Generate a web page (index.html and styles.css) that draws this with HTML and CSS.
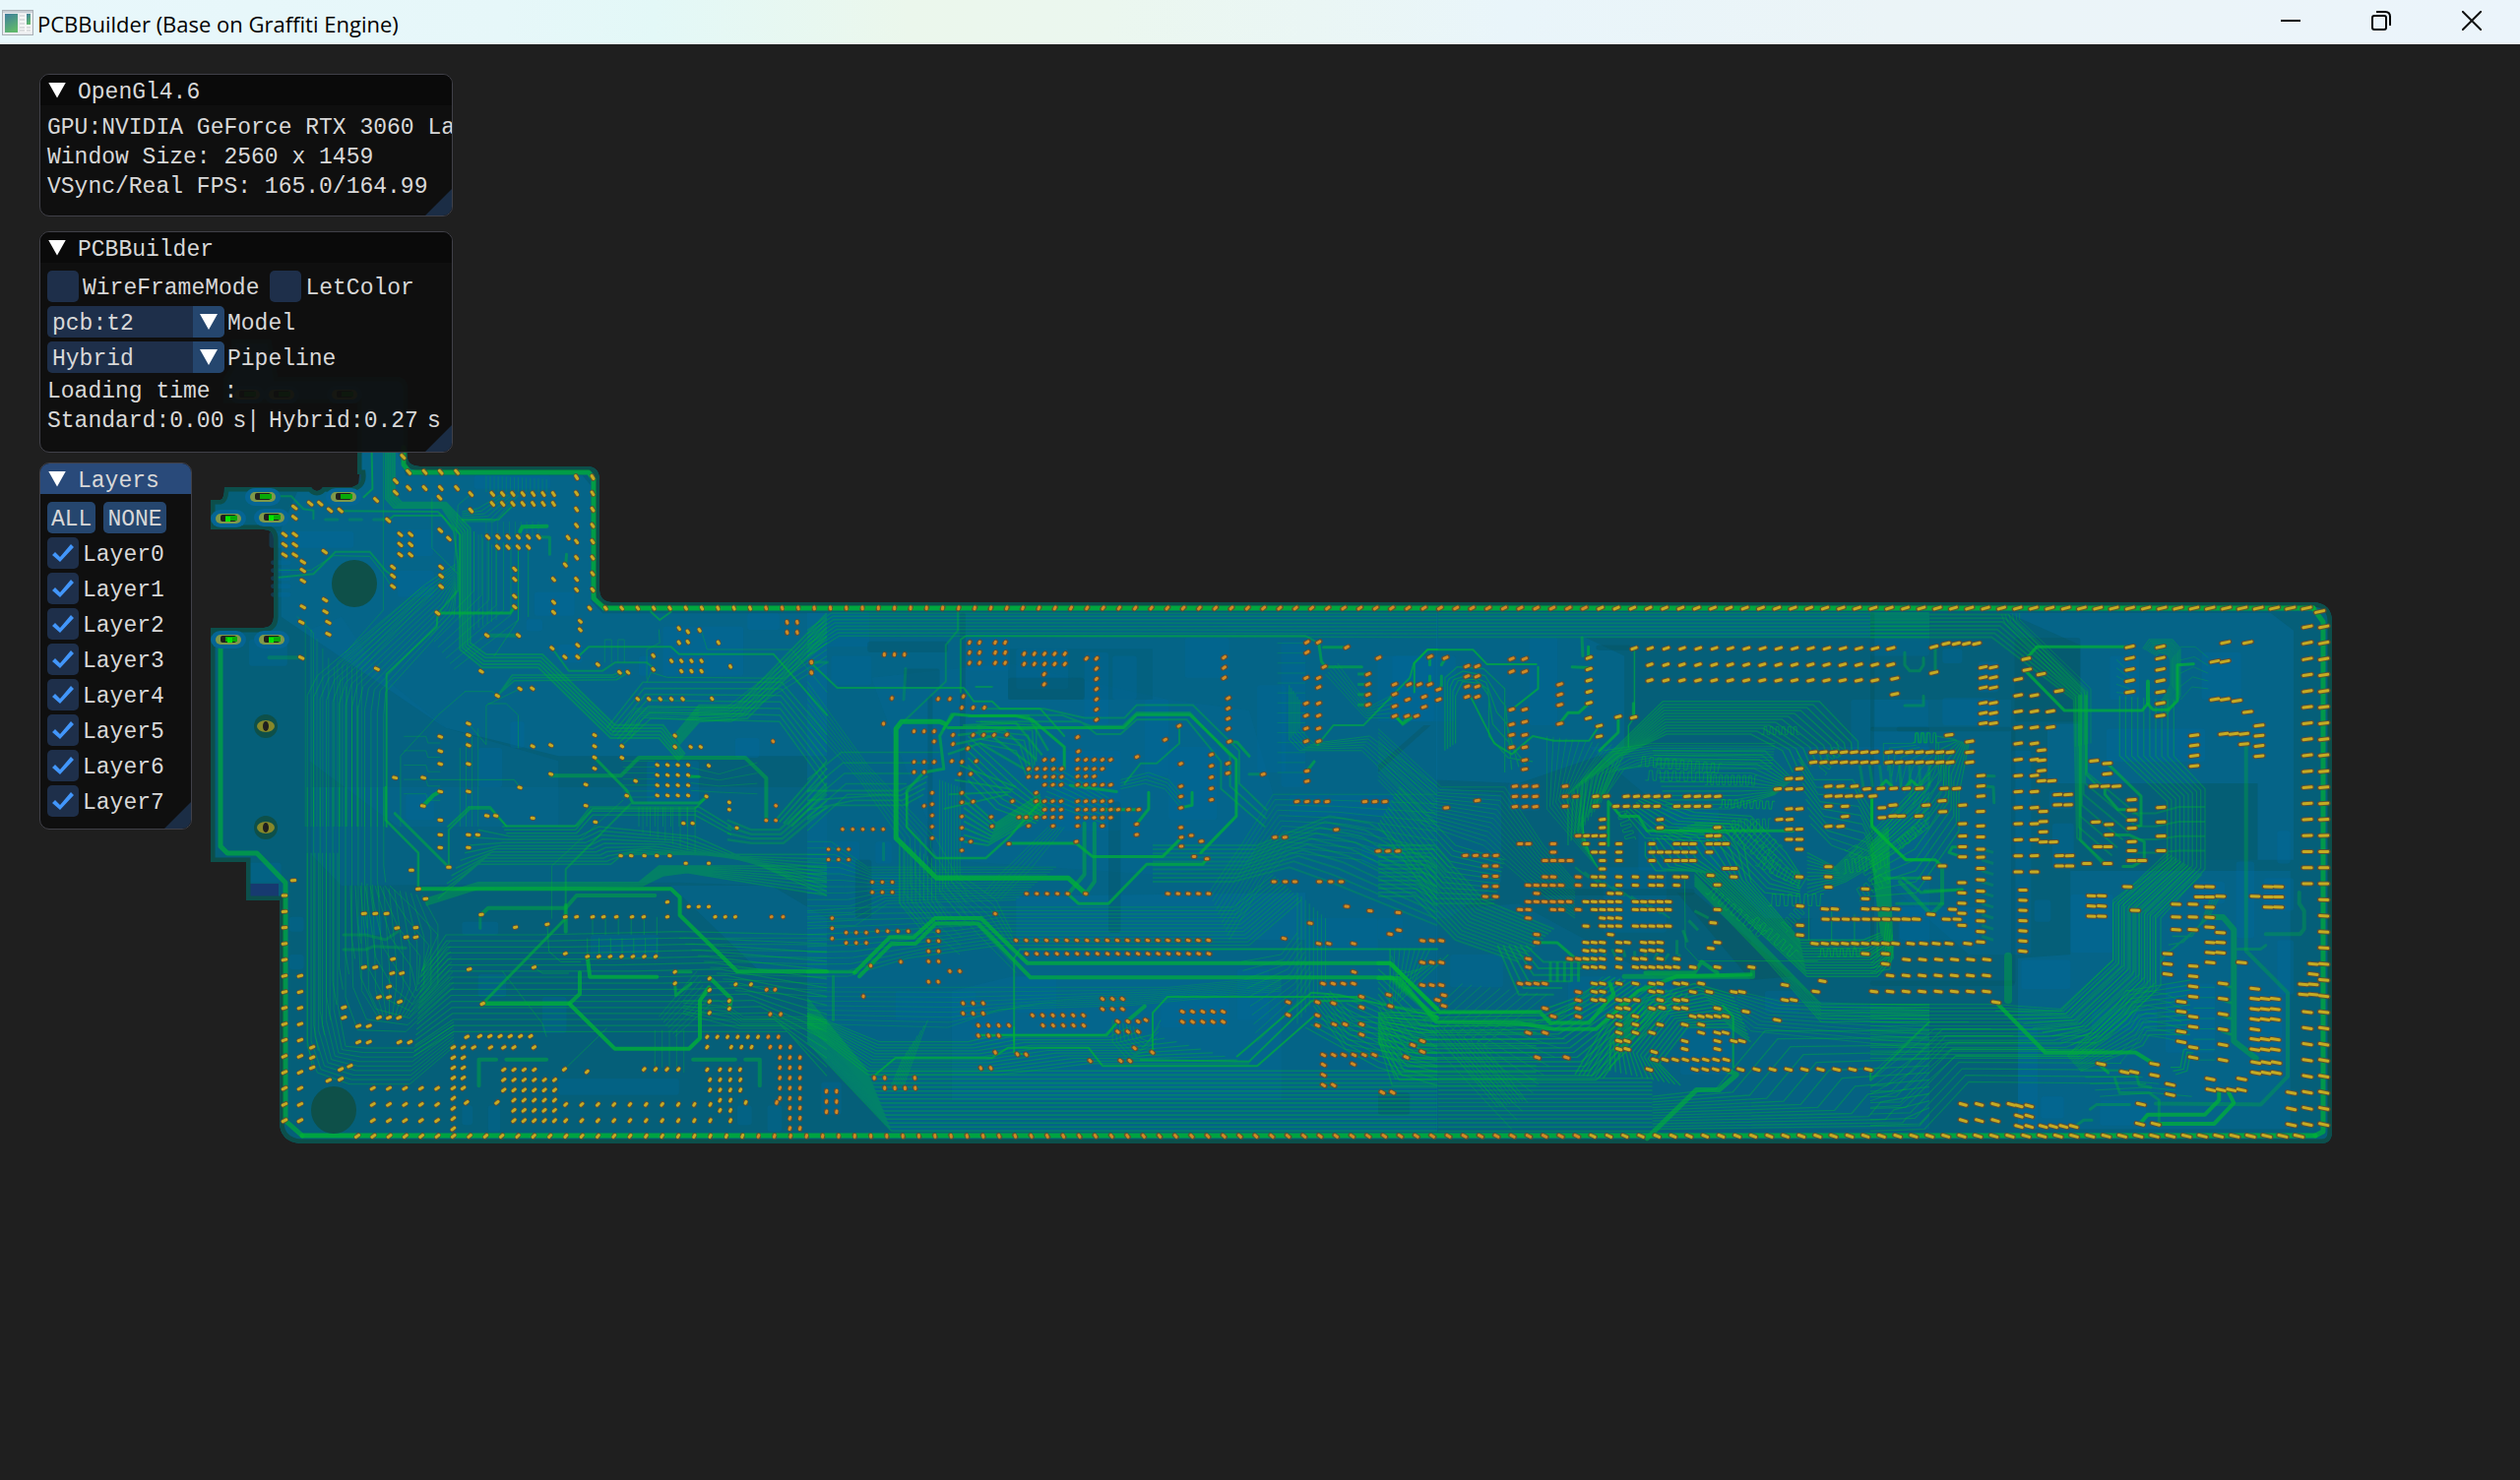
FILE: index.html
```html
<!DOCTYPE html>
<html lang="en">
<head>
<meta charset="utf-8">
<title>PCBBuilder (Base on Graffiti Engine)</title>
<link rel="stylesheet" href="styles.css">
</head>
<body>
<header class="titlebar">
  <svg class="app-icon" width="32" height="26" viewBox="0 0 32 26" aria-hidden="true">
    <defs><linearGradient id="g" x1="0" y1="0" x2="0.4" y2="1"><stop offset="0" stop-color="#3f7d9e"/><stop offset="1" stop-color="#5fb76c"/></linearGradient></defs>
    <rect x=".5" y=".5" width="31" height="25" fill="#e9ebee" stroke="#a9b0b6"/>
    <rect x="1" y="1" width="30" height="2" fill="#c9cfd6"/>
    <rect x="3" y="4" width="13" height="19" fill="url(#g)"/>
    <rect x="18" y="4" width="12" height="19" fill="#f6f6f6"/>
    <path d="M18 6h5M18 10h5M18 14h5M18 18h5M18 21h5M25 18h4M25 21h4" stroke="#c3c6ca"/>
    <rect x="25" y="4" width="4" height="11" fill="url(#g)"/>
  </svg>
  <h1 class="app-title">PCBBuilder (Base on Graffiti Engine)</h1>
  <div class="window-buttons">
    <button class="window-button" aria-label="Minimize"><svg width="20" height="20" viewBox="0 0 20 20"><path d="M0 10h20" stroke="#000" stroke-width="2"/></svg></button>
    <button class="window-button" aria-label="Restore"><svg width="20" height="20" viewBox="0 0 20 20" fill="none" stroke="#000" stroke-width="2"><rect x="1" y="5" width="14" height="14" rx="2"/><path d="M5 1h9q5 0 5 5v9"/></svg></button>
    <button class="window-button" aria-label="Close"><svg width="20" height="20" viewBox="0 0 20 20"><path d="M0 0l20 20M20 0L0 20" stroke="#111" stroke-width="2"/></svg></button>
  </div>
</header>
<main class="scene">
  <svg class="board" id="board" viewBox="0 45 2560 1459" role="img" aria-label="Circuit board"></svg>
  <div class="panels">
    <section class="panel panel-info">
      <div class="panel-head"><button class="collapse" aria-label="Collapse"></button><h2 class="panel-title">OpenGl4.6</h2></div>
      <div class="panel-body">
        <p class="line">GPU:NVIDIA GeForce RTX 3060 La</p>
        <p class="line">Window Size: 2560 x 1459</p>
        <p class="line">VSync/Real FPS: 165.0/164.99</p>
      </div>
    </section>
    <section class="panel panel-builder">
      <div class="panel-head"><button class="collapse" aria-label="Collapse"></button><h2 class="panel-title">PCBBuilder</h2></div>
      <div class="panel-body">
        <div class="row row-checks">
          <label class="check"><input type="checkbox"><span class="caption">WireFrameMode</span></label>
          <label class="check"><input type="checkbox"><span class="caption">LetColor</span></label>
        </div>
        <label class="row combo"><span class="combo-box"><select><option>pcb:t2</option></select></span><span class="caption">Model</span></label>
        <label class="row combo"><span class="combo-box"><select><option>Hybrid</option></select></span><span class="caption">Pipeline</span></label>
        <p class="line">Loading time :</p>
        <p class="line line-times"><span>Standard:0.00</span><span>s|</span><span>Hybrid:0.27</span><span>s</span></p>
      </div>
    </section>
    <section class="panel panel-layers">
      <div class="panel-head"><button class="collapse" aria-label="Collapse"></button><h2 class="panel-title">Layers</h2></div>
      <div class="panel-body">
        <div class="row row-buttons"><button class="push">ALL</button><button class="push">NONE</button></div>
        <label class="row check"><input type="checkbox" checked><span class="caption">Layer0</span></label>
        <label class="row check"><input type="checkbox" checked><span class="caption">Layer1</span></label>
        <label class="row check"><input type="checkbox" checked><span class="caption">Layer2</span></label>
        <label class="row check"><input type="checkbox" checked><span class="caption">Layer3</span></label>
        <label class="row check"><input type="checkbox" checked><span class="caption">Layer4</span></label>
        <label class="row check"><input type="checkbox" checked><span class="caption">Layer5</span></label>
        <label class="row check"><input type="checkbox" checked><span class="caption">Layer6</span></label>
        <label class="row check"><input type="checkbox" checked><span class="caption">Layer7</span></label>
      </div>
    </section>
  </div>
</main>
<script src="board.js"></script>
</body>
</html>
```
FILE: styles.css
```css
* { box-sizing: border-box; margin: 0; padding: 0; }

body {
  min-height: 100vh;
  display: flex;
  flex-direction: column;
  background: #1f1f1f;
  font: 23px/30px "Liberation Mono", monospace;
  color: #d8d8d8;
}

button, select, input { font: inherit; color: inherit; border: 0; }

.titlebar {
  height: 45px;
  display: flex;
  align-items: center;
  gap: 4px;
  padding: 0 3px 0 2px;
  background: linear-gradient(90deg, #e8f7fb 0%, #e6f7f9 20%, #e3f8f7 26%, #ebf7ec 36%, #ebf7ef 44%, #e9f5fa 60%, #ebf4f7 75%, #ebf4fb 100%);
  color: #000;
}
.app-icon { flex: none; }
.app-title { font: 400 22px/30px "Open Sans", sans-serif; padding-top: 2px; }
.window-buttons { display: flex; margin-left: auto; }
.window-button {
  width: 92px;
  height: 45px;
  display: grid;
  place-items: center;
  background: none;
  padding-bottom: 3px;
}

.scene { position: relative; flex: 1; overflow: hidden; }
.board { position: absolute; left: 0; top: 0; width: 100%; height: auto; }

.panels {
  position: relative;
  display: flex;
  flex-direction: column;
  align-items: flex-start;
  padding: 30px 40px;
}

.panel {
  position: relative;
  border: 1px solid #404048;
  border-radius: 10px;
  background: rgba(15, 15, 15, .94);
  overflow: hidden;
}
.panel::after {
  content: "";
  position: absolute;
  right: 0;
  bottom: 0;
  width: 27px;
  height: 27px;
  background: #1b2d45;
  clip-path: polygon(100% 0, 100% 100%, 0 100%);
}
.panel-info { width: 420px; height: 145px; margin-bottom: 15px; }
.panel-builder { width: 420px; height: 225px; margin-bottom: 10px; }
.panel-layers { width: 155px; height: 373px; }

.panel-head {
  height: 31px;
  display: flex;
  align-items: center;
  gap: 12px;
  padding-left: 8px;
  background: #0a0a0a;
}
.panel-layers .panel-head { background: #294a7a; }
.panel-title { font-size: 23px; font-weight: 400; padding-top: 4px; }
.collapse {
  width: 18px;
  height: 16px;
  background: #fff;
  clip-path: polygon(0 0, 100% 0, 50% 100%);
}

.panel-body { padding: 8px 7px; }
.line { white-space: pre; }
.line-times { display: flex; gap: 9px; }

.row { display: flex; align-items: center; height: 32px; margin-bottom: 4px; }
.row-checks { gap: 11px; }
.row-buttons { gap: 8px; }
.caption { padding-top: 4px; }

.check { display: flex; align-items: center; gap: 4px; }
.check input {
  appearance: none;
  flex: none;
  width: 32px;
  height: 32px;
  border-radius: 5px;
  background: #1e2f4a;
}
.check input:checked::before {
  content: "";
  display: block;
  width: 32px;
  height: 32px;
  background: #4296fa;
  clip-path: polygon(5px 18px, 8px 15px, 13px 20px, 24px 7px, 27px 10px, 13px 25px);
}

.combo { gap: 3px; }
.combo-box { position: relative; width: 180px; height: 32px; }
.combo-box select {
  appearance: none;
  width: 180px;
  height: 32px;
  padding: 3px 0 0 5px;
  border-radius: 5px;
  background: linear-gradient(90deg, #1e2f4a 148px, #25466e 148px);
}
.combo-box::after {
  content: "";
  position: absolute;
  right: 7px;
  top: 8px;
  width: 18px;
  height: 16px;
  background: #fff;
  clip-path: polygon(0 0, 100% 0, 50% 100%);
  pointer-events: none;
}

.push { height: 32px; padding: 3px 4px 0; border-radius: 5px; background: #25466e; }
```
FILE: board.js
```js
// Draws the circuit board: outline, copper pours, traces, pads and vias.
const board = document.getElementById("board");
const NS = "http://www.w3.org/2000/svg";

function add(tag, attrs, parent = board) {
  const node = document.createElementNS(NS, tag);
  for (const key in attrs) node.setAttribute(key, attrs[key]);
  parent.appendChild(node);
  return node;
}

// Each sector of the board has its own origin and grid density.
const sector = (x, y, sx, sy) => ([px, py]) => [x + px / sx, y + py / sy];
const A = sector(200, 440, 2.45, 3);
const B = sector(200, 800, 2.45, 3);
const C = sector(820, 600, 2.45, 2.703);
const D = sector(1400, 600, 2.8, 2.703);
const E = sector(1900, 600, 3, 2.703);
const F = sector(0, 0, 1, 1);

const parse = text => text.split(" ").map(pair => pair.split(",").map(Number));
const path = points => "M" + points.map(p => p[0].toFixed(1) + " " + p[1].toFixed(1)).join("L");

const OUTLINE = "M227 410V385L235 372V345H275L282 383H404Q414 384 414 396V466Q415 474 430 474H598Q609 475 609 488V600Q610 612 622 612H2350Q2369 613 2369 632V1150Q2369 1162 2358 1162H305Q284 1160 284 1140V915H250V876H214V638H268Q278 637 278 627V548Q278 538 268 538H214V508H224Q228 507 228 495H316A7 8 0 0 0 328 495H358Q368 492 367 482H363V410Z";
add("path", { d: OUTLINE }, add("clipPath", { id: "board-edge" }));
add("path", { d: OUTLINE, fill: "#055f79" });

// Copper pours
function pour(s, list, color, opacity) {
  for (const [x, y, w, h] of list) {
    const [x0, y0] = s([x, y]);
    const [x1, y1] = s([x + w, y + h]);
    add("rect", { x: x0, y: y0, width: x1 - x0, height: y1 - y0, rx: 3, fill: color, opacity });
  }
}
function area(s, text, opacity, color = "#056a98") {
  add("path", { d: path(parse(text).map(s)) + "Z", fill: color, opacity });
}
area(A, "410,60 500,60 520,130 960,130 980,160 980,510 1010,550 1568,550 1568,985 900,985 620,900 210,560 210,290 250,180 400,180", .55);
area(A, "460,740 620,900 900,1000 900,1200 500,1200 280,1000 280,600 360,560", .3);
area(B, "285,0 1568,0 1568,330 1420,300 1200,290 360,300 285,205", .3);
area(B, "1180,300 1430,300 1568,400 1568,560 1400,560", .4);
area(C, "0,62 1568,62 1568,1485 210,1485 0,1240", .45);
area(C, "160,240 500,200 900,300 1100,330 1160,560 1100,760 860,780 340,740 220,420", .3);
area(C, "520,840 1240,830 1240,960 520,960", .45);
area(C, "510,1060 1180,1060 1180,1400 360,1400 360,1100", .35);
area(D, "165,62 1400,62 1400,130 590,130 700,180 700,430 400,530 165,520", .45);
area(D, "165,540 350,560 350,800 200,900 165,900", .35);
area(D, "600,430 1568,430 1568,900 1100,900 760,560", .35);
area(D, "165,880 400,860 860,1100 1568,1150 1568,1480 165,1480", .3);
area(E, "420,62 1220,62 1290,110 1290,740 1180,740 1180,530 540,530 540,366 640,366 640,150", .5);
area(E, "610,770 1280,770 1280,1480 450,1480 450,1010 610,1000", .5);
area(E, "10,300 430,300 430,1000 300,1000 0,760", .3);
area(E, "985,530 1180,530 1180,740 985,740", .55, "#045c72");
area(D, "0,500 150,370 130,370 0,480", .4, "#0a5560");
area(D, "850,830 900,830 1180,1060 1060,1070", .55, "#0a5560");
area(C, "500,160 860,160 860,300 500,300", .35, "#045c72");

const BLUE = "#006ba0";
pour(A, [[180, 300, 210, 50], [498, 295, 90, 80], [690, 130, 190, 40], [840, 485, 100, 72], [130, 630, 95, 80], [500, 420, 90, 80], [1160, 590, 200, 150], [1370, 550, 80, 50], [820, 568, 40, 36], [900, 645, 60, 55], [1100, 680, 30, 60], [184, 388, 50, 14], [184, 412, 50, 14], [184, 436, 50, 14], [184, 460, 50, 14], [184, 486, 50, 14], [1120, 1000, 130, 130], [700, 960, 60, 120], [780, 880, 35, 80], [1340, 930, 60, 60]], BLUE, .35);
pour(B, [[125, 230, 85, 60], [230, 395, 36, 45], [230, 510, 36, 45], [660, 410, 90, 40], [980, 450, 170, 70], [900, 888, 300, 50], [660, 970, 26, 60], [725, 970, 30, 80], [1345, 970, 36, 60], [1420, 970, 36, 80], [400, 390, 60, 60], [700, 570, 70, 70], [860, 640, 60, 110], [520, 20, 70, 80]], BLUE, .3);
pour(C, [[45, 60, 110, 95], [60, 180, 100, 80], [395, 120, 110, 100], [520, 160, 130, 110], [690, 170, 60, 200], [760, 180, 60, 120], [940, 130, 110, 110], [1120, 260, 70, 240], [840, 300, 60, 210], [1180, 140, 60, 400], [40, 690, 90, 90], [150, 780, 80, 60], [220, 1100, 200, 80], [420, 1180, 90, 60], [880, 1100, 170, 100], [520, 1060, 100, 100], [1200, 560, 260, 60], [1380, 700, 110, 50], [35, 1350, 50, 90], [1420, 180, 140, 180], [620, 440, 160, 220], [900, 430, 120, 200], [1240, 900, 180, 90], [1070, 1040, 80, 140], [170, 690, 40, 60]], BLUE, .32);
pour(D, [[40, 180, 180, 180], [430, 130, 80, 240], [205, 1000, 150, 90], [370, 530, 90, 75], [1400, 60, 168, 120], [1345, 300, 220, 140], [1230, 900, 170, 70], [1480, 850, 88, 120], [640, 760, 180, 180], [540, 1060, 300, 120], [740, 600, 230, 170], [860, 1200, 150, 130], [1100, 1100, 100, 60], [0, 900, 70, 60]], BLUE, .3);
pour(E, [[220, 160, 60, 40], [330, 195, 60, 85], [220, 295, 165, 75], [730, 180, 90, 120], [1010, 170, 120, 130], [545, 550, 75, 50], [555, 640, 65, 125], [610, 835, 130, 160], [460, 1015, 150, 80], [1000, 800, 80, 60], [1200, 790, 90, 90], [1115, 745, 55, 210], [900, 1080, 150, 190], [1160, 1110, 95, 170], [450, 1200, 60, 280], [520, 1390, 70, 60], [675, 1150, 200, 60], [90, 870, 240, 90], [430, 440, 60, 560], [1240, 960, 50, 150], [1240, 660, 40, 90], [500, 850, 50, 60], [700, 1400, 140, 70], [720, 380, 300, 90]], BLUE, .35);
pour(C, [[150, 140, 200, 30], [240, 215, 90, 50], [500, 240, 190, 60], [380, 60, 14, 520], [750, 580, 30, 360], [120, 740, 40, 160], [300, 290, 12, 500]], "#07525d", .3);
pour(E, [[80, 375, 350, 12], [430, 380, 12, 700], [0, 1072, 440, 14], [0, 375, 12, 600], [440, 130, 200, 230]], "#07525d", .3);
pour(D, [[1400, 60, 12, 320], [1400, 375, 168, 12], [620, 150, 100, 14], [440, 820, 460, 18], [0, 1380, 90, 60]], "#07525d", .35);
add("rect", { x: 250, y: 898, width: 33, height: 17, fill: "#173a70" });
add("path", { d: OUTLINE, fill: "none", stroke: "#0c4f4b", "stroke-width": 9, "clip-path": "url(#board-edge)" });

// Traces
const GREEN = "#00b038";
function trace(s, width, opacity, text) {
  add("path", { d: path(parse(text).map(s)), fill: "none", stroke: GREEN, "stroke-width": width, opacity, "stroke-linejoin": "round", "stroke-linecap": "round" });
}
// A bus: n traces spread evenly between two border traces.
function bus(s, n, width, opacity, from, to) {
  const p = parse(from).map(s), q = parse(to).map(s);
  const size = Math.max(p.length, q.length);
  const fit = list => Array.from({ length: size }, (_, k) => list[Math.round(k * (list.length - 1) / (size - 1))]);
  const a = fit(p), b = fit(q);
  let d = "";
  for (let i = 0; i < n; i++) {
    const t = i / (n - 1);
    d += path(a.map((v, k) => [v[0] + (b[k][0] - v[0]) * t, v[1] + (b[k][1] - v[1]) * t]));
  }
  add("path", { d, fill: "none", stroke: GREEN, "stroke-width": width, opacity: opacity * .85 });
}
// A delay line that swings to both sides of its axis.
function snake(s, x0, y0, x1, y1, n, amp, opacity = .5) {
  const [ax, ay] = s([x0, y0]), [bx, by] = s([x1, y1]);
  const len = Math.hypot(bx - ax, by - ay), nx = -(by - ay) / len * amp, ny = (bx - ax) / len * amp;
  const pts = [];
  for (let i = 0; i < n; i++) {
    const side = i % 2 ? -1 : 1;
    for (const t of [i / n, (i + .8) / n]) pts.push([ax + (bx - ax) * t + nx * side, ay + (by - ay) * t + ny * side]);
  }
  add("path", { d: path(pts), fill: "none", stroke: GREEN, "stroke-width": 1, opacity, "stroke-linejoin": "round" });
}

// North-west sector
bus(A, 13, 1, .5, "645,400 570,460 300,740 275,800 275,1200", "645,480 640,560 470,790 465,860 465,1200");
bus(A, 10, 1, .4, "270,570 270,1200", "400,830 400,1200");
bus(A, 5, 2, .5, "470,60 470,200 490,228 610,228 655,310 655,660 710,715 850,715 1030,930 1150,930 1200,1000", "492,60 492,190 510,212 620,212 680,290 680,640 720,675 860,675 1040,890 1160,890 1215,980");
bus(A, 7, 1, .45, "690,300 690,480 580,620", "800,350 800,570 640,720");
bus(A, 6, 1, .4, "560,470 350,700 350,1200", "600,470 410,720 410,1200");
trace(A, 2, .5, "357,238 600,240 655,310 655,560");
trace(A, 2, .5, "476,266 490,252 610,252 640,300 650,400 650,480 600,550");
trace(A, 2, .5, "205,440 290,430 345,362 430,362 470,420 488,436");
trace(A, 1, .5, "205,418 285,418 340,374 430,376 465,430 480,460");
trace(A, 1, .4, "464,60 464,540 370,670");
trace(A, 2, .6, "435,60 437,170 415,196");
trace(A, 2, .45, "190,193 235,193 265,232 290,236 290,262");
trace(A, 3, .7, "599,549 780,549 791,530");
trace(A, 2, .6, "599,549 597,590 472,735 472,1200");
trace(A, 4, .7, "871,284 810,286 804,300");
trace(A, 3, .45, "850,317 878,318 878,370");
trace(A, 3, .5, "918,402 920,370");
trace(A, 2, .5, "660,265 750,265 790,217");
bus(A, 6, 1, .5, "660,270 740,270 800,190", "660,240 700,230 760,186");
bus(A, 16, 1, .35, "720,130 720,180", "870,140 870,180");
bus(A, 10, 1, .3, "720,270 720,315", "850,270 850,315");
bus(A, 6, 1, .4, "690,300 690,600", "745,350 745,570");
trace(A, 1, .5, "800,350 800,570 740,680");
trace(A, 1, .5, "825,350 825,560");
trace(A, 1, .4, "585,200 585,350 650,430");
trace(A, 1, .4, "682,186 650,220 640,420");
trace(A, 2, .6, "948,683 975,652 1180,652 1200,674 1435,674 1568,860");
trace(A, 2, .5, "884,656 925,725 1010,725 1040,700 1120,700 1140,721");
bus(A, 3, 1.5, .5, "748,801 785,738 1035,738 1052,730", "748,801 790,755 1045,752 1073,730");
bus(A, 6, 2, .45, "1568,550 1345,830 1250,830 1190,920", "1568,620 1370,870 1250,880 1200,950");
bus(A, 7, 1.5, .45, "1020,900 1110,760 1455,760 1568,920", "1060,950 1130,870 1450,880 1568,1080");
bus(A, 6, 1, .5, "1060,900 1090,840 1320,835 1568,600", "1080,930 1110,868 1330,880 1568,700");
trace(A, 1, .45, "1120,760 1130,730 1170,745 1460,748 1568,640");
trace(A, 1, .4, "1150,600 1152,640 1120,660 1120,750");
trace(A, 1, .4, "1255,600 1270,660 1480,660 1568,790");
bus(A, 2, 1, .4, "1015,700 1015,630 1032,630 1032,700", "1048,700 1048,630 1064,630 1064,700");
trace(A, 2, .6, "1130,545 1152,570 1180,545");
trace(A, 4, .5, "881,1045 1055,1045 1100,990 1365,990 1417,1052 1417,1181");
trace(A, 3, .6, "990,990 1070,1090 1085,1128 1250,1128 1270,1108");
bus(A, 3, 1.5, .5, "760,1200 940,1200 980,1140 1250,1140 1330,1200", "770,1220 945,1220 985,1165 1240,1165 1330,1225");
bus(A, 5, 2, .5, "1568,1000 1440,1181", "1568,1090 1480,1200");
trace(A, 2, .5, "676,1140 730,1140 770,1198");
trace(A, 2, .5, "625,1200 676,1142");
trace(A, 4, .7, "563,1137 588,1105 606,1093");
trace(A, 1, .5, "580,1057 790,1057 804,1081");
trace(A, 1, .4, "676,886 720,950 720,830 804,780");
trace(A, 1, .4, "800,960 800,860 770,825 725,825");
trace(A, 1, .4, "668,788 735,788 748,801");
bus(A, 5, 1, .4, "515,925 570,925 575,945 606,945", "515,1100 570,1100 575,1120 606,1120");
bus(A, 4, 1, .4, "655,960 655,1200", "700,900 700,1200");
bus(A, 8, 1, .45, "1100,1140 1100,1200", "1240,1140 1240,1200");
trace(A, 3, .7, "1225,1048 1250,1048");
bus(A, 7, 1, .4, "1060,1000 1140,1000", "1060,1110 1140,1110");
bus(A, 4, 1, .4, "1230,1020 1300,1040 1395,1005", "1230,1090 1300,1095 1395,1100");
trace(A, 3, .3, "320,264 350,264");
trace(A, 3, .3, "380,264 410,264");
trace(A, 3, .3, "440,264 470,264");
trace(A, 4, .3, "180,685 255,685");
trace(A, 4, .35, "725,617 795,617");
trace(A, 1, .4, "507,1200 507,985 600,860 668,788");
trace(A, 1, .4, "250,560 290,610 290,1200");

// South-west sector
bus(B, 13, 1, .5, "275,0 275,770 287,850", "465,0 465,240 470,290");
bus(B, 9, 1, .5, "275,200 275,790 300,870 380,905 530,905 640,790", "350,200 350,660 370,790 420,795 540,795 640,715");
bus(B, 12, 1, .45, "410,290 410,620 450,700", "560,330 600,420 600,600 530,700");
bus(B, 10, 1, .5, "370,300 370,640 400,740 520,745 640,610", "480,300 540,370 600,450 560,560 630,470");
bus(B, 17, 1.2, .5, "540,820 640,745 1470,745 1568,880", "560,560 620,450 850,450 1200,440 1568,450");
bus(B, 10, 1.5, .45, "600,340 700,235 1030,235 1060,205 1568,205", "700,130 780,150 950,150 1000,120 1240,150 1568,330");
bus(B, 8, 1.5, .45, "570,340 700,290 1100,290 1150,240 1220,240 1568,240", "570,360 700,310 1110,300 1160,270 1220,260 1568,330");
bus(B, 10, 1, .45, "1200,460 1568,460", "1340,620 1568,640");
bus(B, 6, 1, .45, "1210,650 1300,650 1360,700 1568,700", "1210,690 1350,735 1568,735");
trace(B, 4, .75, "551,310 1180,310 1202,335 1202,390 1345,562 1568,562");
trace(B, 3, .55, "493,80 627,244");
trace(B, 2.5, .6, "470,0 470,100 551,200 551,310");
trace(B, 2, .5, "627,244 627,130 680,65 730,65 770,118 945,118 985,65 1240,65 1270,28");
trace(B, 2, .45, "1080,50 918,250 918,395");
trace(B, 1, .4, "1060,40 883,240 883,400");
trace(B, 4, .5, "708,388 725,368 918,368 945,330 1140,330");
trace(B, 4, .55, "918,360 918,440");
trace(B, 3, .6, "918,400 715,655");
trace(B, 4, .8, "711,660 927,660 1040,797 1225,797 1252,765 1252,650 1275,610");
trace(B, 4, .7, "927,660 953,630 953,565");
trace(B, 4, .75, "972,516 978,578 1145,578");
trace(B, 4, .7, "1276,580 1330,645 1325,675");
trace(B, 3, .6, "1190,563 1230,563");
trace(B, 3, .6, "1190,598 1192,635 1230,598");
trace(B, 1, .5, "839,549 860,567 925,567");
trace(B, 1, .5, "872,418 876,500 905,532 955,532");
trace(B, 1, .45, "915,860 1020,735");
trace(B, 3, .4, "705,390 705,430");
trace(B, 4, .45, "702,910 702,830 745,830");
trace(B, 4, .5, "770,830 870,830");
trace(B, 4, .5, "1235,830 1340,830");
trace(B, 4, .45, "1365,830 1401,830 1401,910");
bus(B, 6, 1, .5, "985,395 985,450", "1145,395 1145,450");
bus(B, 7, 1, .5, "972,460 972,516", "1145,460 1145,516");
bus(B, 5, 1, .4, "1140,740 1140,850", "1212,740 1212,870");
trace(B, 3, .35, "365,450 420,450 470,465 500,440");
trace(B, 3, .35, "365,495 420,495 440,485 520,490");
bus(B, 8, 1, .45, "1150,700 1245,560", "1190,760 1280,660");
trace(B, 1, .4, "760,560 860,720 870,760");
bus(B, 8, 1, .4, "1110,60 1110,140", "1240,60 1240,200");
bus(B, 4, 2.5, .4, "1320,100 1380,130 1450,130 1568,0", "1320,160 1380,170 1460,170 1568,60");

// Centre sector
bus(C, 8, 1.5, .4, "0,110 60,62 1568,62", "0,180 80,125 1568,128");
trace(C, 2, .4, "375,60 375,110 345,150 345,250 240,360");
trace(C, 2, .5, "382,280 382,135 395,125 1240,125 1270,143");
trace(C, 2, .6, "10,200 75,268 390,268 415,305 460,305 480,325 580,325 640,400");
trace(C, 5, .8, "340,365 330,360 235,360 221,380 221,680 322,790 650,790 693,833");
trace(C, 3, .75, "340,380 365,340 410,345 520,345 560,355 640,430 640,490");
trace(C, 3, .75, "350,377 788,377 820,341 952,341 1068,465 1068,620 980,720");
bus(C, 3, 2, .5, "430,360 680,360 720,395 780,395 820,355 945,355 1030,470 1030,545 1140,650", "430,325 590,325 690,350 790,350 820,315 960,315 1075,440 1075,530 1145,605");
trace(C, 3, .75, "505,695 670,695 710,731 885,731 931,680");
trace(C, 3, .7, "648,833 675,860 750,860 845,752 985,752 995,737");
trace(C, 2.5, .65, "248,560 248,650 320,735 445,735 505,675 580,580");
trace(C, 3, .6, "360,340 330,400 340,490 290,500 248,550 248,590");
bus(C, 4, 1.8, .45, "0,550 230,550 300,510", "0,630 60,590 240,590 290,560");
bus(C, 5, 1.5, .4, "0,520 85,445 330,445", "0,660 100,560 220,560");
bus(C, 8, 1, .4, "0,250 150,480 320,680 400,840", "0,360 130,520 230,680 230,860 380,1000");
bus(C, 8, 1, .45, "330,520 330,830 430,950 520,1050", "380,540 380,780 470,850 510,940");
bus(C, 10, 1, .5, "230,690 230,860 290,940", "320,740 320,850 350,900");
trace(C, 4, .75, "118,1050 205,953 265,953 318,900 432,900 548,1024 1450,1024 1568,1150");
trace(C, 4, .7, "130,1060 210,970 270,970 320,915 425,915 556,1063 1455,1063 1568,1175");
trace(C, 3, .65, "0,1048 118,1048");
trace(C, 2, .6, "515,1240 515,1010 530,985 1568,985");
bus(C, 14, 1, .4, "0,690 60,690 150,760 620,760", "0,920 120,920 200,860 520,850");
bus(C, 12, 1.2, .4, "0,880 150,870 480,870 1060,870 1160,780", "0,1060 100,1060 250,1010 480,975 1100,975 1230,850");
bus(C, 12, 1, .4, "1000,830 1080,700 1160,560 1300,560 1568,560", "1050,960 1140,790 1200,720 1380,740 1568,840");
bus(C, 10, 2, .35, "860,700 1120,700 1300,620 1400,640 1568,760", "860,800 1060,800 1200,760 1300,800 1568,920");
bus(C, 12, 1.2, .5, "0,1160 180,1240 400,1240 480,1220 740,1220 770,1190", "0,1200 150,1330 480,1330 700,1300 860,1300 1100,1300");
bus(C, 16, 1.6, .45, "0,1120 150,1320 1568,1320", "0,1240 210,1485 1568,1485");
bus(C, 9, 1, .35, "0,1090 380,1090 900,1090 1180,1060", "0,1190 350,1200 480,1150 800,1140 1180,1100");
trace(C, 2.5, .75, "425,1222 745,1222 772,1185");
trace(C, 2, .7, "170,1330 220,1284 460,1284 500,1256 700,1256 735,1306 1120,1306 1260,1170");
trace(C, 2, .7, "860,1270 860,1160 897,1116 1255,1116 1380,1116");
trace(C, 2, .65, "830,1290 1100,1294 1255,1128 1380,1128");
trace(C, 2, .65, "1070,1280 1255,1105 1320,1110 1568,1170");
trace(C, 4, .65, "800,1180 840,1142");
trace(C, 2, .7, "515,1200 515,1270 545,1275");
bus(C, 10, 1, .45, "1080,1020 1180,1000 1220,940", "1120,1240 1230,1120 1260,1060");
bus(C, 12, 1.4, .5, "1380,1110 1450,1140 1568,1160", "1240,1200 1420,1310 1568,1360");
bus(C, 8, 1.2, .5, "1300,1100 1360,1170 1568,1180", "1260,1140 1340,1260 1568,1310");
bus(C, 8, 1, .45, "240,1280 210,1360", "300,1180 240,1360");
bus(C, 8, 1, .45, "1220,830 1220,1190", "1290,900 1290,1080");
bus(C, 7, 1.6, .55, "400,400 520,520 600,600", "400,520 470,600 570,640");
bus(C, 8, 2, .55, "390,560 470,640 580,560", "390,690 450,700 590,610");
bus(C, 5, 2.5, .55, "400,345 550,345 600,440", "350,450 430,420 540,490");
bus(C, 6, 1.5, .5, "420,360 570,370 570,470", "430,420 520,440 550,520");
bus(C, 4, 2, .55, "340,600 500,560", "380,480 520,540");
bus(C, 8, 1, .5, "610,480 750,570", "590,580 740,640");
trace(C, 3, .7, "735,602 825,602");
trace(C, 3, .6, "655,535 770,553");
trace(C, 3, .7, "820,642 850,600 850,555");
trace(C, 3, .7, "930,597 958,590 958,555");
trace(C, 2, .5, "926,372 926,420 870,475 830,475 790,530");
trace(C, 4, .5, "690,640 690,780 650,833");
trace(C, 4, .5, "715,640 715,800 693,833");
bus(C, 4, 1, .45, "780,520 850,500 900,520 930,560", "780,545 840,530 890,545 930,597");
bus(C, 14, 1, .35, "1170,145 1240,145", "1170,500 1240,500");
bus(C, 6, 1, .5, "1200,260 1200,410 1225,440 1380,440 1568,640", "1225,300 1225,380 1260,420 1400,400 1568,540");
trace(C, 2, .6, "1270,425 1310,370 1385,370 1460,285 1500,240 1510,200 1545,162 1568,162");
bus(C, 6, 1, .4, "1290,230 1390,350 1450,350", "1320,200 1400,320 1460,285");
bus(C, 4, 3, .6, "1370,230 1395,230", "1370,314 1395,314");
trace(C, 3, .6, "1273,143 1280,195 1290,210 1380,210");
trace(C, 3, .6, "1285,156 1343,156");
trace(C, 3, .6, "1244,496 1262,470");
trace(C, 3, .6, "1462,345 1482,365 1500,345");
bus(C, 8, 1, .5, "760,1180 760,1240 800,1290 860,1290", "820,1200 830,1230 850,1240 880,1180");
bus(C, 9, 1, .5, "1450,985 1450,1140", "1550,985 1500,1100");
trace(C, 2, .5, "420,265 460,265");
trace(C, 3, .35, "10,197 50,197");
trace(C, 3, .3, "245,215 240,300");
trace(C, 3, .3, "190,695 190,740");
trace(C, 3, .4, "65,1060 65,1180");
trace(C, 3, .4, "1100,505 1135,505");
trace(C, 3, .6, "1050,415 1070,417 1100,455");
bus(C, 6, 1, .4, "600,650 480,780 440,830", "640,650 560,760 480,850");

// Processor sector
bus(D, 8, 1.6, .4, "170,62 1568,62", "170,128 1568,128");
bus(D, 12, 1.5, .5, "540,700 540,560 810,305 1255,305 1365,415 1365,440", "640,560 700,450 820,395 1060,395 1150,440 1180,500");
bus(D, 10, 1, .5, "570,670 580,520 640,440 780,420 1130,420", "650,560 700,490 780,480 1120,490");
bus(D, 14, 1, .45, "0,380 180,540 360,540 470,700 560,800", "0,520 120,640 300,700 420,800 560,900");
bus(D, 14, 1, .45, "480,400 480,600 640,780", "720,430 590,520 580,700");
bus(D, 12, 1.2, .5, "60,540 220,700 360,740", "0,640 160,860 330,860");
bus(D, 14, 1.8, .4, "0,700 160,700 300,850 500,930", "0,840 100,840 220,960 400,1020");
trace(D, 2, .7, "103,280 103,200 140,163 270,163 310,203 450,203");
bus(D, 5, 1.3, .55, "190,440 190,240 225,210 300,215 360,270 360,500", "220,420 220,290 240,250 290,255 315,290 315,400 370,460 440,470");
trace(D, 2, .7, "380,327 455,270 455,210");
trace(D, 2, .65, "265,295 330,420 380,450 440,400 500,413 600,413 629,372");
trace(D, 3, .7, "517,365 540,336 570,336 600,310");
trace(D, 3, .7, "630,440 683,390 683,347");
trace(D, 1.5, .6, "729,160 729,348 712,372 712,430");
trace(D, 3, .6, "726,348 726,310");
trace(D, 3, .7, "598,155 598,185");
trace(D, 3, .6, "552,210 598,212");
trace(D, 3, .5, "580,130 582,180");
trace(D, 3, .6, "50,345 70,368 95,350");
trace(D, 3, .6, "147,185 147,205");
trace(D, 3, .6, "192,185 180,205");
trace(D, 3, .6, "147,235 147,258");
trace(D, 3, .6, "180,235 180,262 172,272");
trace(D, 3, .7, "655,700 655,580 690,620 740,620 765,660 1180,660");
bus(D, 14, 1.4, .6, "760,690 760,730 790,770 900,770 1220,1060 1420,1060 1465,1010 1450,650", "900,640 1000,640 1040,700 1060,800 1200,960 1380,960 1430,940 1400,700");
bus(D, 10, 1.3, .6, "700,610 760,680 960,690 1100,830 1200,840", "760,560 900,610 1060,620 1160,720 1200,780");
bus(D, 14, 1.2, .55, "780,440 1100,440 1180,520", "820,600 1000,600 1130,560");
bus(D, 10, 1.2, .5, "1190,440 1240,520 1350,520 1400,600", "1230,640 1290,700 1400,740 1420,800");
bus(D, 12, 1.2, .5, "1220,720 1300,760 1450,620 1568,500", "1220,840 1330,800 1470,720 1568,650");
trace(D, 3, .75, "1404,565 1404,645 1500,740 1568,740");
trace(D, 3, .5, "1440,790 1568,790");
snake(D, 740, 468, 980, 490, 22, 5);
snake(D, 760, 508, 960, 512, 18, 5);
snake(D, 1090, 385, 1200, 385, 13, 4);
snake(D, 930, 520, 1080, 522, 18, 5);
snake(D, 970, 585, 1130, 590, 18, 4, .65);
snake(D, 1000, 645, 1120, 640, 14, 5);
snake(D, 940, 820, 1100, 950, 18, 5, .6);
snake(D, 1060, 900, 1190, 1005, 14, 5, .6);
snake(D, 1250, 995, 1380, 995, 14, 4, .6);
snake(D, 1110, 850, 1270, 850, 14, 6, .55);
snake(D, 1000, 650, 1140, 760, 16, 7, .6);
snake(D, 1050, 640, 1140, 720, 10, 7, .6);
snake(D, 1080, 740, 1220, 810, 14, 6, .55);
snake(D, 1320, 760, 1460, 740, 14, 7, .5);
snake(D, 1340, 700, 1420, 800, 12, 6, .5);
snake(D, 1480, 700, 1568, 630, 10, 5, .5);
snake(D, 1360, 840, 1460, 780, 10, 6, .5);
snake(D, 690, 600, 720, 690, 10, 5, .5);
snake(D, 1260, 500, 1320, 420, 10, 5, .5);
snake(D, 1520, 405, 1568, 405, 6, 5, .5);
snake(D, 1150, 930, 1210, 870, 10, 5, .5);
bus(D, 16, 1.5, .6, "0,1160 180,1160 460,1155 560,1120 660,1060", "0,1240 60,1345 620,1345 800,1180 880,1110");
bus(D, 12, 1.4, .5, "0,1040 140,1160 450,1160", "0,1230 40,1360 450,1360");
trace(D, 4, .75, "0,1024 35,1024 175,1158 460,1158 490,1188 600,1188 670,1110 660,1080");
trace(D, 4, .7, "0,1065 60,1065 165,1185 400,1188 500,1205 620,1205 740,1100 850,1060 1060,1055");
trace(D, 5, .55, "700,1060 1065,1060 1065,1035");
trace(D, 3, .7, "451,967 510,968 560,1010 600,1010");
trace(D, 4, .6, "760,1050 900,1050 920,1020 965,1050");
bus(D, 14, 1.4, .6, "660,1320 660,1240 760,1120 900,1080 1010,1110", "860,1360 800,1300 880,1200 1000,1200 1060,1240");
bus(D, 8, 1.5, .6, "700,1130 640,1200 560,1330", "800,1150 720,1230 640,1340");
bus(D, 18, 1, .45, "100,1190 380,1480", "500,1190 640,1060");
bus(D, 10, 1, .5, "240,1080 130,1180 340,1420", "480,1110 300,1250 420,1400");
bus(D, 6, 2, .5, "340,975 400,1110 500,1110", "420,975 470,1020 620,1020");
bus(D, 14, 1.5, .45, "170,1340 780,1340", "170,1485 780,1485");
bus(D, 13, 1.3, .5, "780,1390 960,1370 1100,1210 1568,1210", "780,1480 1540,1470 1568,1440");
trace(D, 5, .6, "765,1505 905,1372 970,1372 1020,1330 990,1316");
trace(D, 2, .65, "1010,1310 1010,1170 980,1140");
trace(D, 1, .5, "872,790 874,980 910,1018 1250,1018");
bus(D, 7, 1.3, .5, "900,780 1260,1137 1568,1137", "900,810 1100,1010 1260,1185 1568,1185");
bus(D, 10, 1, .45, "1020,1100 1150,1130 1568,1140", "1020,1170 1060,1210 1568,1260");
trace(D, 2, .5, "1568,1185 1400,1345 1400,1316");
bus(D, 5, 3, .6, "490,1020 490,1075", "570,1020 570,1075");
bus(D, 10, 2, .4, "560,760 600,790", "800,880 830,900");
bus(D, 9, 3, .4, "600,980 620,1000", "860,1000 840,1020");
bus(D, 4, 3, .45, "850,960 850,1000", "900,880 940,900");
bus(D, 9, 1.2, .45, "35,985 35,1080", "60,1130 200,1000");
bus(D, 4, 1.2, .55, "1225,870 1225,960", "1420,900 1420,1000");
bus(D, 8, 3, .4, "1370,480 1380,540", "1568,480 1568,540");

// East sector
bus(E, 7, 2, .4, "0,66 420,66 660,280 660,500 820,620", "0,128 370,128 620,300 630,680 720,750");
bus(E, 6, 1, .45, "455,62 455,80 672,270 672,420", "400,66 410,90 625,290 625,430");
trace(E, 3, .75, "475,188 508,155 790,155");
trace(E, 3, .75, "472,220 592,330 828,330 845,312 862,328 908,328 936,303 936,205 985,202");
trace(E, 4, .7, "846,310 846,250");
bus(E, 10, 1.2, .5, "760,290 760,455 905,580 905,740 740,850 740,1015 580,1155 380,1155", "925,300 925,455 1020,545 1020,765 885,900 885,1085 720,1230 640,1260");
bus(E, 9, 1.1, .45, "830,160 850,135 920,135 945,160 945,290 900,345", "870,180 880,170 905,175 915,190 915,260 890,300");
bus(E, 5, 1, .4, "750,190 790,225", "750,280 790,285");
bus(E, 5, 1, .4, "945,155 990,155 1030,185", "945,300 980,265 1030,270");
trace(E, 3, .6, "722,475 825,565 825,645 797,652");
trace(E, 3, .6, "715,538 715,560 755,602 797,602");
trace(E, 3, .55, "722,672 790,672 835,690 835,740 800,758 770,758");
trace(E, 3, .5, "640,290 640,685 710,750");
trace(E, 2.5, .5, "658,290 658,505 690,535");
bus(E, 4, 2, .4, "797,612 870,612 940,595 1020,595", "797,720 870,720 940,715 1020,715");
trace(E, 4, .35, "1145,425 1145,990 1272,1105 1272,1335 1190,1412 870,1410");
trace(E, 6, .45, "1035,897 1075,897 1108,932 1108,1238 1175,1285");
trace(E, 4, .35, "1307,830 1307,860 1322,880 1322,930 1310,944 1205,944");
trace(E, 3, .35, "1120,985 1190,985 1205,975");
bus(E, 16, 1.2, .5, "0,1137 380,1137 580,1150 740,1015 740,860 905,720", "0,1285 650,1285 700,1240 870,1100 870,900 1010,780");
bus(E, 9, 1.2, .5, "0,1360 50,1360 220,1205 640,1205", "0,1485 165,1480 300,1350 840,1355");
bus(E, 6, 1, .5, "0,1330 180,1185 300,1185", "0,1420 90,1415 260,1280 640,1280");
trace(E, 4, .75, "383,1131 533,1269 808,1269 865,1301");
bus(E, 12, 1.2, .5, "600,1280 750,1140 780,1100 975,1070", "640,1320 830,1250 850,1220 975,1220");
bus(E, 5, 1, .5, "640,1320 780,1320", "700,1390 860,1380 980,1390");
trace(E, 4, .75, "822,1465 845,1440 1020,1440 1063,1400 1063,1375");
trace(E, 4, .75, "870,1465 1048,1465 1108,1408 1090,1375");
trace(E, 3, .4, "745,1340 760,1380 850,1380 880,1400 880,1460");
trace(E, 3, .4, "670,1425 690,1412 790,1412");
trace(E, 3, .4, "620,1475 650,1455 675,1455");
trace(E, 8, .4, "420,1005 420,1125");
trace(E, 3, .4, "105,170 105,205 120,221 150,221 162,205 162,185");
trace(E, 3, .4, "105,316 162,316 162,290");
trace(E, 3, .4, "198,160 198,225");
trace(E, 3, .4, "165,825 280,822");
bus(E, 10, 1.2, .55, "0,700 130,560 200,480 200,400 260,410", "0,840 140,830 270,660 270,560 300,420");
bus(E, 12, 1, .5, "40,480 40,420 130,420", "180,650 240,560 240,480");
snake(E, 130, 405, 210, 405, 9, 5, .6);
snake(E, 80, 700, 150, 650, 9, 4, .6);
trace(E, 3, .75, "5,565 5,650 110,740 198,740 219,757");
trace(E, 4, .45, "219,757 219,860 185,890 90,800");
trace(E, 3, .5, "100,790 155,830 280,822");
trace(E, 3, .4, "80,860 220,860");
trace(E, 3, .6, "280,705 250,705 240,720 280,732");
trace(E, 3, .4, "340,509 378,510");
trace(E, 3, .4, "345,537 375,540 377,583");
bus(E, 9, 3, .35, "340,710 375,720", "340,950 375,960");
trace(E, 3, .7, "30,540 48,522 66,538");
trace(E, 3, .7, "108,540 125,522 145,538");
bus(E, 5, 1.2, .55, "0,1000 40,980 50,900", "0,1050 60,1040 72,960");
bus(E, 4, 3, .55, "1070,1080 1100,1090", "1070,1210 1100,1220");
bus(E, 8, 1, .45, "985,1090 1050,1090", "985,1290 1050,1290");
bus(E, 7, 1, .45, "780,1100 850,1100 905,1110 948,1130", "760,1300 830,1220 900,1230 948,1240");
bus(E, 3, 1.3, .6, "985,1255 955,1262 945,1310 915,1310", "985,1285 975,1275 965,1320 930,1330");
trace(E, 3, .6, "695,1300 725,1325");
trace(E, 3, .4, "810,1330 820,1360 855,1365");
bus(E, 4, 1.3, .45, "920,950 980,950 1010,910 1040,840", "885,1020 900,1000 1030,900 1065,840");

// Border copper
trace(F, 5, .75, "410,455 410,472 416,480 598,480 603,487 603,608 614,618");
trace(F, 5, .9, "614,618 2350,618");
trace(F, 5, .7, "2350,618 2360,632 2360,1150 2352,1154");
trace(F, 5, .85, "2352,1154 307,1154");
trace(F, 5, .65, "307,1154 290,1139 290,897 261,867 231,867 224,860 224,655 232,650");

// Mounting holes
for (const [cx, cy] of [[360, 593], [339, 1128]]) add("ellipse", { cx, cy, rx: 23, ry: 24, fill: "#0e5049" });
for (const cy of [738, 841]) {
  add("circle", { cx: 270, cy, r: 12, fill: "#0e5049" });
  add("ellipse", { cx: 270, cy, rx: 9, ry: 6, fill: "#86882a" });
  add("ellipse", { cx: 270, cy, rx: 3, ry: 5, fill: "#1f1f1f" });
}

// Connector pads
for (const [cx, cy] of [[267, 505], [349, 505], [232, 527], [276, 526], [232, 650], [276, 650], [251, 401], [286, 401], [350, 401]]) {
  add("rect", { x: cx - 18, y: cy - 9, width: 36, height: 18, rx: 10, fill: "#056594" });
  add("rect", { x: cx - 13, y: cy - 5, width: 26, height: 10, rx: 5, fill: "#80994a" });
  add("rect", { x: cx - 8, y: cy - 4, width: 16, height: 7, rx: 2, fill: "#20201c" });
  add("rect", { x: cx - 3, y: cy - 3, width: 12, height: 5, fill: "#08a808" });
}
for (const [cx, cy] of [[232, 527], [276, 526], [234, 650], [276, 650]]) add("rect", { x: cx - 3, y: cy - 2, width: 5, height: 5, fill: "#00e800" });

// Vias lean away from the point below the camera.
const EYE = [1190, 880];
let halo = "", core = "", near = "";
function vias(s, list) {
  for (const [x, y, cols = 1, rows = 1, dx = 0, dy = 0] of list)
    for (let r = 0; r < rows; r++)
      for (let c = 0; c < cols; c++) {
        const [px, py] = s([x + c * dx, y + r * dy]);
        const lx = (px - EYE[0]) * .0028, ly = (py - EYE[1]) * .0035;
        const seg = (k, o) => `M${(px - lx * k - o).toFixed(1)} ${(py - ly * k).toFixed(1)}l${(lx * 2 * k + o * 2).toFixed(1)} ${(ly * 2 * k).toFixed(1)}`;
        halo += seg(1, 1.2);
        if (Math.abs(px - EYE[0]) < 420) near += seg(.9, .7); else core += seg(1, .8);
      }
}
vias(F, [[599, 618, 108, 1, 16.3], [363, 1154.5, 122, 1, 16.3]]);
vias(A, [[527, 119, 4, 1, 40], [527, 168, 4, 1, 40], [513, 72], [495, 147], [495, 182], [446, 204], [476, 266], [604, 197], [682, 186], [682, 236], [736, 186, 7, 2, 25.3, 30], [724, 317, 6, 1, 25.3], [749, 348, 4, 1, 25.3], [924, 319], [917, 402], [945, 135, 1, 6, 0, 49], [945, 446], [945, 478], [985, 135, 1, 8, 0, 49], [506, 309, 2, 3, 26, 31], [218, 310, 2, 3, 26, 31], [318, 362], [264, 393], [264, 419], [264, 451], [264, 530], [260, 577], [319, 509], [320, 545], [327, 577], [327, 613], [260, 685], [488, 409, 2, 1, 120], [488, 436, 2, 1, 120], [488, 468, 2, 1, 120], [243, 227], [243, 258], [282, 215], [307, 215], [331, 235], [357, 236], [606, 297], [627, 322], [791, 415], [791, 446], [791, 498], [791, 530], [888, 446], [888, 516], [888, 547], [599, 549], [722, 617], [800, 617], [448, 719], [708, 727], [748, 801], [804, 780], [835, 779], [884, 656], [916, 683], [948, 683], [948, 647], [998, 706], [1052, 730], [1073, 730], [1136, 679], [1136, 721], [954, 574], [954, 600], [1200, 596], [1222, 606], [1251, 601], [1200, 639], [1222, 637], [1298, 639], [1328, 712], [1181, 695], [1206, 695, 3, 2, 25, 31], [1469, 577, 2, 2, 25, 31], [1529, 699], [1529, 730], [1097, 811, 5, 1, 28], [1282, 810], [1434, 940], [1190, 923], [1190, 957], [1229, 957], [1254, 957], [990, 921, 1, 4, 0, 34], [1058, 955], [1058, 990], [1146, 1012, 4, 4, 25.5, 31], [1274, 1014], [1092, 1061], [1070, 1106], [1268, 1108], [676, 886], [676, 921], [676, 952], [676, 1009], [676, 1093], [606, 926], [606, 970], [606, 1009], [606, 1093], [606, 1180], [836, 955], [881, 952], [881, 1040], [804, 1081], [564, 1051], [493, 1051], [563, 1137], [722, 1167], [744, 1167], [836, 1174], [968, 1072], [968, 1136], [1325, 1126], [1325, 1148], [1441, 1136], [1417, 1181], [1441, 1181], [992, 1186]]);
vias(B, [[218, 330, 1, 15, 0, 49], [257, 575, 1, 10, 0, 49], [240, 284], [534, 253], [627, 244], [551, 310], [569, 340], [606, 145], [606, 184], [676, 145], [699, 145], [676, 184], [416, 385, 3, 1, 28], [498, 429], [545, 428], [521, 457], [545, 457], [488, 524], [416, 549], [444, 549], [486, 567], [510, 567], [478, 608], [453, 640], [478, 640], [505, 654], [453, 702, 3, 1, 25], [366, 671], [366, 702], [402, 728], [428, 728], [402, 777], [428, 777], [504, 777], [530, 777], [287, 793], [287, 824], [287, 855], [358, 860], [381, 850], [328, 894], [358, 890], [438, 918, 5, 3, 40, 49], [638, 793, 1, 9, 0, 31], [663, 793, 1, 5, 0, 31], [689, 793], [731, 793], [764, 793], [789, 793], [839, 793], [672, 761], [704, 759, 6, 1, 25.3], [671, 961], [747, 961], [764, 861, 4, 1, 25.3], [764, 892, 6, 2, 25.3, 31], [789, 954, 5, 3, 25.3, 31], [915, 860], [971, 867], [918, 967, 10, 2, 40, 49], [1113, 860, 4, 1, 28.5], [1270, 761, 8, 1, 25.3], [1270, 792], [1330, 792, 3, 1, 25.3], [1427, 792, 3, 1, 25], [1451, 824, 3, 5, 25, 31], [1476, 978, 2, 3, 25, 31], [1270, 861], [1302, 861, 3, 1, 25], [1277, 892, 4, 2, 25.3, 31], [1302, 954, 2, 2, 26, 31], [1328, 1016], [1366, 961], [1443, 961], [708, 388], [793, 427], [872, 418], [678, 555], [839, 549], [711, 660], [917, 395], [945, 395], [985, 395], [1012, 395], [1044, 395], [1083, 395], [1112, 395], [1171, 395], [1171, 350], [917, 507], [972, 516, 7, 1, 28.3], [1055, 209], [1081, 209], [1114, 209], [1145, 209], [1177, 209], [1217, 232], [1274, 232], [1344, 124], [1211, 110], [1234, 110], [1224, 364, 3, 1, 25], [1290, 395, 3, 1, 25], [1430, 395], [1459, 395], [1190, 563], [1190, 598], [1276, 583], [1276, 618], [1276, 653], [1276, 688], [1325, 651], [1325, 675], [1341, 601], [1379, 601], [1418, 617], [1439, 617], [1427, 692], [1453, 692]]);
vias(C, [[192, 176, 3, 1, 25], [11, 197], [11, 226], [211, 296], [190, 366], [404, 143, 2, 3, 25, 28], [468, 143, 2, 3, 25, 28], [540, 174, 5, 2, 25.3, 28], [590, 230], [590, 258], [695, 187], [720, 187, 1, 7, 0, 28], [1038, 184, 1, 3, 0, 28], [1048, 296, 1, 4, 0, 28], [326, 298], [355, 298], [389, 291], [385, 322, 3, 1, 28], [266, 387, 3, 1, 25], [316, 415], [363, 397], [363, 422], [400, 434], [413, 397, 3, 1, 26], [497, 396], [266, 471, 3, 1, 25], [266, 499, 2, 1, 25], [360, 469], [385, 471], [421, 469], [380, 504], [407, 504], [311, 556], [311, 587], [291, 592], [311, 618, 1, 3, 0, 31], [385, 556], [385, 582], [413, 580], [385, 621, 1, 4, 0, 31], [407, 690], [458, 622], [460, 648], [502, 696], [511, 579], [88, 656, 5, 1, 25.3], [53, 711, 3, 2, 25, 28], [162, 801, 3, 2, 25, 28], [62, 900, 1, 3, 0, 28], [97, 940, 3, 2, 25, 28], [175, 936, 4, 1, 25.5], [326, 936], [302, 963, 2, 3, 25, 28], [355, 1046], [380, 1046], [302, 1075], [326, 1075], [158, 1031], [140, 1115], [233, 1020], [468, 888], [551, 490, 5, 2, 20.6, 22], [591, 465], [612, 465], [591, 534, 3, 1, 20.6], [570, 556], [570, 579, 4, 1, 20.6], [591, 602, 3, 1, 20.6], [527, 623, 2, 1, 18], [570, 623, 4, 1, 20.6], [551, 647], [612, 647], [673, 465, 5, 1, 20.6], [673, 490, 4, 1, 20.6], [673, 511, 3, 1, 20.6], [673, 534, 5, 1, 20.6], [673, 579, 5, 1, 20.6], [673, 602, 5, 1, 20.6], [673, 624, 5, 1, 20.6], [673, 647], [735, 647], [673, 403], [675, 442], [670, 690], [774, 602, 3, 1, 25.5], [820, 642], [820, 671], [821, 457], [891, 410], [926, 372], [930, 476], [930, 538], [930, 566], [930, 597], [1006, 451, 1, 5, 0, 31], [1047, 475], [1047, 502], [1051, 415], [1135, 505], [930, 651], [931, 678], [931, 703], [956, 673], [981, 689], [963, 731], [995, 737], [546, 833, 5, 1, 25.5], [693, 833], [898, 833, 5, 1, 25.3], [520, 961, 20, 1, 25.2], [546, 998, 19, 1, 25.2], [388, 1134, 3, 2, 25, 28], [561, 1167, 6, 1, 25.3], [587, 1195, 5, 1, 25.3], [735, 1122, 3, 2, 25, 28], [934, 1157, 5, 2, 25.3, 28], [426, 1195, 4, 1, 25.3], [426, 1223, 3, 1, 25.3], [468, 1269], [523, 1274], [545, 1275], [432, 1312], [457, 1312], [773, 1184, 3, 2, 25.3, 28], [843, 1180], [815, 1257], [859, 1269], [780, 1292], [803, 1292], [704, 1292], [167, 1339], [193, 1339], [268, 1339], [193, 1367, 4, 1, 25.3], [48, 1376, 2, 3, 25, 28], [1244, 142], [1273, 142], [1244, 170], [1343, 156], [1287, 210], [1242, 240], [1273, 240], [1273, 266], [1242, 310], [1273, 310], [1242, 344, 2, 3, 31, 35], [1244, 496], [1244, 524], [1396, 230, 1, 4, 0, 28], [1422, 185], [1219, 580, 4, 1, 25], [1388, 580, 3, 1, 25], [1317, 657], [1164, 678], [1189, 678], [1162, 800], [1190, 800], [1214, 800], [1275, 800], [1303, 800], [1329, 800], [1343, 868], [1401, 880], [1252, 914], [1187, 956], [1273, 970], [1298, 970], [1360, 970], [1284, 1080, 4, 1, 25.3], [1361, 1048], [1197, 1131], [1197, 1166], [1270, 1131], [1270, 1167], [1270, 1195], [1310, 1134], [1312, 1192], [1339, 1192], [1380, 1116], [1380, 1145], [1380, 1192], [1380, 1220], [1285, 1276, 6, 1, 25.3], [1285, 1303, 1, 3, 0, 28], [1359, 1301], [1310, 1359]]);
vias(D, [[148, 182], [192, 185], [47, 258], [88, 258], [117, 258], [147, 258], [47, 285], [84, 300], [131, 292], [172, 272], [172, 300], [47, 318], [131, 320], [47, 345], [82, 345], [109, 345], [253, 208, 2, 4, 29, 28], [380, 188, 2, 2, 37, 35], [517, 258, 1, 3, 0, 28], [517, 366], [600, 185, 1, 5, 0, 31], [598, 351], [629, 372], [629, 401], [683, 347], [727, 349], [380, 327], [417, 327], [380, 368], [417, 361], [380, 397, 2, 2, 37, 34], [417, 466], [417, 491], [728, 159, 17, 1, 45.7], [773, 204, 16, 1, 45.7], [773, 247, 15, 1, 45.7], [1469, 242], [1469, 285], [389, 538, 3, 3, 29, 28], [532, 538], [532, 566, 2, 1, 30], [532, 593], [619, 566, 2, 1, 30], [619, 593], [706, 566, 5, 1, 29], [677, 593, 5, 1, 29], [879, 566, 4, 1, 29], [850, 593, 4, 1, 29], [282, 577], [194, 597], [0, 716, 3, 1, 28], [248, 728, 4, 1, 29], [305, 757, 2, 4, 29, 28], [638, 629], [638, 652], [569, 674, 4, 1, 23.3], [802, 629], [802, 652], [404, 696], [427, 696], [498, 696], [498, 719], [475, 742, 4, 1, 23.3], [591, 696], [638, 696], [685, 696], [615, 719, 2, 1, 23], [685, 719], [638, 742], [685, 742], [638, 765], [779, 696], [779, 719, 6, 1, 23.3], [779, 742], [825, 742, 4, 1, 23.3], [849, 696, 3, 1, 23.3], [942, 674, 2, 1, 23.3], [942, 696, 3, 1, 23.3], [942, 719], [965, 651], [475, 787, 2, 1, 23], [427, 810, 5, 1, 23.3], [451, 832], [569, 787], [569, 810], [615, 787, 2, 2, 23, 23], [685, 787], [685, 810], [732, 787], [732, 810], [779, 787, 2, 2, 23, 23], [849, 787, 2, 1, 23], [849, 810], [661, 832], [685, 832], [427, 855, 6, 1, 23.3], [591, 855, 5, 1, 23.3], [732, 855, 5, 2, 23.3, 22], [404, 877, 2, 1, 23], [498, 877, 2, 1, 23], [569, 877], [615, 877, 4, 1, 23.3], [427, 900], [638, 900, 3, 1, 23.3], [451, 945], [451, 967], [591, 922], [638, 922, 3, 1, 23.3], [732, 922, 5, 1, 23.3], [661, 945], [591, 967, 3, 3, 23.3, 22.5], [685, 967, 2, 1, 23.3], [685, 990], [755, 967, 3, 2, 23.3, 22], [685, 1012], [732, 1012, 2, 1, 23], [802, 1012], [849, 1012], [591, 1035, 3, 1, 23.3], [685, 1035], [732, 1035, 6, 1, 23.3], [895, 1035], [965, 1035], [1062, 1035], [427, 1012], [427, 1035], [545, 1012], [569, 1012], [404, 1080, 4, 1, 23.3], [615, 1080, 2, 3, 23.3, 22.5], [569, 1103, 1, 4, 0, 22.5], [685, 1080], [732, 1080], [779, 1080, 2, 2, 23, 22], [849, 1080, 2, 1, 23], [919, 1080], [895, 1103], [942, 1103], [1012, 1103, 2, 1, 23], [685, 1125, 1, 7, 0, 22.5], [708, 1125, 2, 1, 27], [708, 1148], [732, 1170, 1, 3, 0, 22.5], [802, 1125], [779, 1148], [807, 1146], [849, 1125, 2, 2, 23, 22.5], [802, 1193], [779, 1215], [872, 1193], [895, 1170, 5, 1, 23.3], [965, 1148], [1046, 1157], [919, 1193], [919, 1215], [965, 1215, 2, 1, 23], [965, 1238], [965, 1260], [1012, 1238, 2, 1, 23], [872, 1238], [872, 1260], [708, 1238], [708, 1260], [661, 1170], [475, 1148], [498, 1170], [427, 1215], [475, 1215], [453, 1283], [536, 1283], [785, 1268], [787, 1289, 8, 1, 29], [771, 1316], [901, 1316, 4, 1, 29.5], [1031, 1316, 9, 1, 45.5], [965, 877], [953, 913], [965, 967], [946, 983], [946, 783], [965, 809], [990, 764], [1012, 764], [1012, 787], [1157, 1084], [1157, 1125], [1182, 1125], [1135, 1180], [126, 962, 3, 1, 27], [126, 1022, 3, 1, 27], [126, 1084, 3, 1, 27], [187, 1112], [169, 1125], [187, 1141], [57, 885], [59, 933], [34, 944], [30, 1111], [35, 1142], [99, 1249], [126, 1238], [126, 1267], [80, 1282], [12, 1379], [41, 1379], [1238, 444, 7, 2, 29, 28], [1453, 444, 4, 2, 29, 28], [1198, 490], [1169, 517, 2, 2, 29, 28], [1137, 545], [1281, 538], [1315, 538], [1355, 538], [1390, 545], [1281, 565, 4, 1, 29], [1407, 565], [1430, 544, 4, 1, 36.5], [1281, 593], [1328, 593], [1328, 621], [1281, 648], [1315, 648], [1169, 600, 2, 1, 29], [1141, 629, 2, 1, 29], [1169, 656, 2, 2, 29, 28], [1198, 711], [1198, 787], [1281, 759, 1, 3, 0, 28], [1200, 867], [1200, 920], [1200, 947], [1433, 597], [1433, 624], [1465, 590], [1465, 620], [1488, 620], [1538, 620], [1386, 820], [1386, 847], [1271, 875, 2, 1, 28], [1386, 875, 4, 1, 29], [1273, 903, 10, 1, 28.7], [1242, 970, 9, 1, 28.7], [1386, 998], [1443, 998], [1443, 1026], [1264, 1073], [1245, 1102]]);
vias(E, [[1332, 100, 1, 17, 0, 44.1], [1382, 100, 1, 32, 0, 44.1], [1332, 1158, 1, 8, 0, 44.1], [1370, 58], [1283, 1380, 1, 3, 0, 44], [1350, 1026], [1350, 1054], [1320, 1082, 2, 2, 30, 28], [62, 159], [62, 204], [75, 242], [75, 285], [194, 155], [194, 226], [231, 146, 4, 1, 31], [344, 211, 2, 3, 31, 28], [344, 309, 2, 3, 31, 28], [451, 244, 1, 13, 0, 44.1], [500, 288, 1, 12, 0, 44.1], [549, 332], [549, 376], [475, 188], [478, 218], [521, 230], [575, 276], [791, 155, 1, 5, 0, 31], [884, 155, 1, 6, 0, 31], [884, 344], [1082, 143], [1150, 143], [1050, 195, 2, 1, 31], [1050, 299, 2, 1, 31], [1117, 303], [1150, 334], [987, 398, 1, 4, 0, 28], [1077, 394, 3, 1, 31], [1139, 422], [1185, 371, 1, 4, 0, 28], [522, 439, 1, 4, 0, 28], [553, 523], [571, 561, 2, 2, 32, 28], [527, 607, 1, 4, 0, 28], [558, 691], [576, 729, 2, 2, 31, 28], [682, 468], [722, 475], [722, 504], [682, 538, 3, 1, 34], [797, 575], [797, 603], [797, 631], [797, 653], [687, 636], [727, 643], [727, 671], [693, 704, 2, 1, 31], [797, 690], [797, 715], [797, 742], [828, 742], [660, 750], [723, 750], [886, 596], [886, 636], [886, 675], [886, 715], [784, 814], [807, 879], [674, 839, 2, 3, 31, 28], [465, 823, 1, 7, 0, 28], [57, 444, 7, 2, 31, 28], [303, 444, 1, 2, 0, 28], [240, 397], [303, 415], [225, 544, 2, 1, 38], [337, 509, 1, 3, 0, 28], [336, 607], [336, 647], [336, 677], [336, 711], [336, 733], [336, 764], [336, 795], [336, 826], [336, 853], [336, 881], [336, 908], [336, 937], [336, 966], [281, 590], [281, 641], [281, 675], [281, 704], [281, 732], [279, 803, 1, 4, 0, 28], [279, 920], [219, 578], [221, 608], [170, 590], [148, 620], [68, 590], [68, 620], [219, 757], [172, 790], [185, 890], [251, 876], [232, 903, 2, 1, 32], [108, 903, 2, 1, 31], [123, 970, 4, 1, 39], [297, 970], [110, 1014, 6, 1, 49], [60, 1058, 7, 1, 49], [11, 1102, 8, 1, 49], [383, 1131], [283, 1412, 4, 1, 49], [283, 1456, 3, 1, 49], [453, 1416, 2, 3, 31, 28], [527, 1472, 4, 1, 31], [1003, 814, 2, 2, 31, 28], [1067, 840], [1034, 870], [1034, 898], [1034, 925], [1067, 940], [932, 862, 2, 3, 51, 35], [1036, 967, 2, 2, 31, 28], [1036, 1022], [1132, 1022], [906, 998, 1, 3, 0, 28], [984, 1032, 1, 4, 0, 28], [948, 1130], [948, 1157], [984, 1171], [984, 1199], [948, 1212], [948, 1240], [984, 1255], [984, 1283], [1075, 1080, 1, 6, 0, 42], [1173, 840], [1213, 814, 2, 3, 31, 28], [1172, 1094], [1172, 1122, 3, 3, 31, 28], [1172, 1206], [1172, 1233, 3, 2, 31, 28], [1175, 1297, 3, 2, 31, 28], [1036, 1342], [1132, 1342], [1038, 1372, 4, 1, 31], [703, 1301], [775, 1323], [804, 1323], [866, 1301], [866, 1332], [914, 1357], [914, 1385], [825, 1411], [822, 1466], [870, 1466]]);
const stroke = (d, color, width, opacity = 1) => add("path", { d, fill: "none", stroke: color, "stroke-width": width, "stroke-linecap": "round", opacity });
stroke(halo, "#6b4a2c", 5, .85);
stroke(core, "#c4ab22", 3);
stroke(near, "#cf8a22", 3);
```
